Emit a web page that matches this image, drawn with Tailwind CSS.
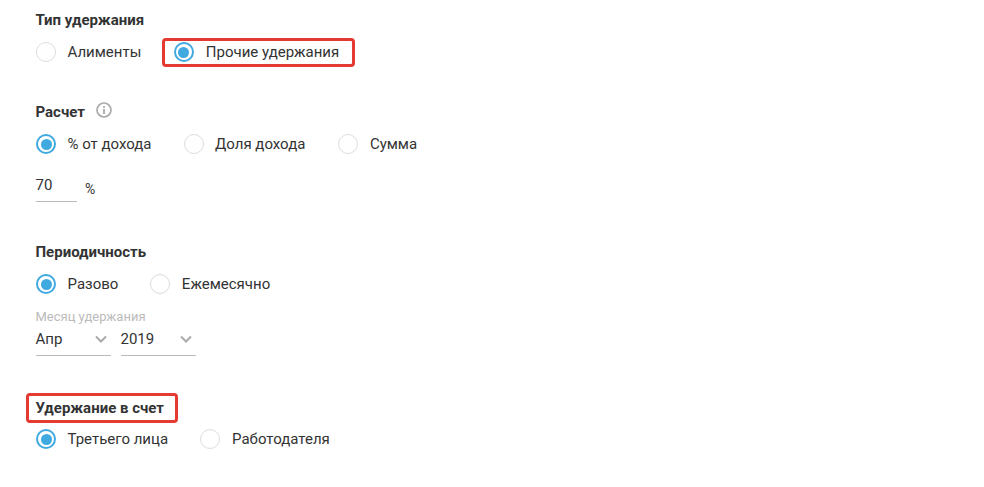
<!DOCTYPE html>
<html lang="ru">
<head>
    <meta charset="UTF-8">
    <title>Тип удержания</title>
    <script src="https://cdn.jsdelivr.net/npm/@tailwindcss/browser@4"></script>
</head>
<body class="bg-white font-['Roboto',sans-serif] text-[15px] text-[#333] w-[984px] h-[487px] overflow-hidden">
    <div class="pl-9 pt-2.5 flex flex-col">
        <p class="h-5 leading-5 font-bold -ml-[0.5px]">Тип удержания</p>
        <div class="flex items-center mt-3 h-5">
            <span class="w-5 h-5 rounded-full border border-[#ddd]"></span>
            <span class="ml-[11.5px] leading-5">Алименты</span>
            <div class="relative flex items-center ml-[32.5px]">
                <span class="w-5 h-5 rounded-full border-2 border-[#3fa9e0] flex items-center justify-center"><span class="w-[11px] h-[11px] rounded-full bg-[#3fa9e0]"></span></span>
                <span class="ml-3 leading-5">Прочие удержания</span>
                <span class="absolute left-[-11.5px] right-[-15.5px] top-[-4px] bottom-[-5px] border-[3px] border-[#e53a32] rounded-[4px]"></span>
            </div>
        </div>

        <div class="flex items-center mt-10 h-5 -ml-[0.5px]">
            <p class="font-bold leading-5">Расчет</p>
            <svg class="ml-[11px] mb-1" width="16" height="16" viewBox="0 0 16 16" fill="none"><circle cx="8" cy="8" r="7" stroke="#aaa" stroke-width="1.7"/><rect x="7.1" y="7" width="1.8" height="5" fill="#aaa"/><rect x="7.1" y="4" width="1.8" height="1.8" fill="#aaa"/></svg>
        </div>
        <div class="flex items-center mt-3 h-5">
            <span class="w-5 h-5 rounded-full border-2 border-[#3fa9e0] flex items-center justify-center"><span class="w-[11px] h-[11px] rounded-full bg-[#3fa9e0]"></span></span>
            <span class="ml-[11.5px] leading-5">% от дохода</span>
            <span class="ml-8 w-5 h-5 rounded-full border border-[#ddd]"></span>
            <span class="ml-[11.5px] leading-5">Доля дохода</span>
            <span class="ml-[33px] w-5 h-5 rounded-full border border-[#ddd]"></span>
            <span class="ml-[11.5px] leading-5">Сумма</span>
        </div>
        <div class="flex mt-[21px]">
            <div class="w-[41px] h-[27px] border-b border-[#bbb] leading-5 indent-[-0.5px]">70</div>
            <span class="ml-2 mt-1 text-[14px] leading-5">%</span>
        </div>

        <p class="mt-10 h-5 leading-5 font-bold -ml-[0.5px]">Периодичность</p>
        <div class="flex items-center mt-3 h-5">
            <span class="w-5 h-5 rounded-full border-2 border-[#3fa9e0] flex items-center justify-center"><span class="w-[11px] h-[11px] rounded-full bg-[#3fa9e0]"></span></span>
            <span class="ml-[11.5px] leading-5">Разово</span>
            <span class="ml-8 w-5 h-5 rounded-full border border-[#ddd]"></span>
            <span class="ml-[11.5px] leading-5">Ежемесячно</span>
        </div>
        <p class="mt-[15px] text-[13px] leading-4 text-[#bbb] -ml-[0.5px]">Месяц удержания</p>
        <div class="flex gap-2.5 mt-[4px]">
            <div class="w-[75px] h-[27px] border-b border-[#bbb] flex justify-between items-start pr-1">
                <span class="leading-5 -ml-[0.5px]">Апр</span>
                <svg class="mt-1.5" width="12" height="9" viewBox="0 0 12 9" fill="none"><path d="M1 1.5l5 5 5-5" stroke="#aaa" stroke-width="2"/></svg>
            </div>
            <div class="w-[75px] h-[27px] border-b border-[#bbb] flex justify-between items-start pr-1">
                <span class="leading-5 -ml-[0.5px]">2019</span>
                <svg class="mt-1.5" width="12" height="9" viewBox="0 0 12 9" fill="none"><path d="M1 1.5l5 5 5-5" stroke="#aaa" stroke-width="2"/></svg>
            </div>
        </div>

        <div class="relative mt-[42px] h-5 w-fit -ml-[0.5px]">
            <p class="leading-5 font-bold">Удержание в счет</p>
            <span class="absolute left-[-9.5px] right-[-14px] top-[-5px] bottom-[-5px] border-[3px] border-[#e53a32] rounded-[4px]"></span>
        </div>
        <div class="flex items-center mt-[11px] h-5">
            <span class="w-5 h-5 rounded-full border-2 border-[#3fa9e0] flex items-center justify-center"><span class="w-[11px] h-[11px] rounded-full bg-[#3fa9e0]"></span></span>
            <span class="ml-[11.5px] leading-5">Третьего лица</span>
            <span class="ml-8 w-5 h-5 rounded-full border border-[#ddd]"></span>
            <span class="ml-3 leading-5">Работодателя</span>
        </div>
    </div>
</body>
</html>
